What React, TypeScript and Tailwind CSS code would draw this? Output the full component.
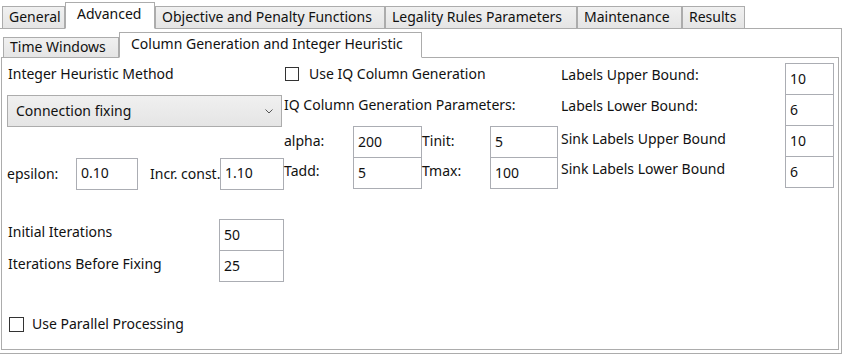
import React from "react";

const Tab = ({ label, w, selected, h, pb = 0 }: { label: string; w: number; selected?: boolean; h: number; pb?: number }) => (
  <div
    className={
      "relative -mb-px flex items-center border border-[#acacac] " +
      (selected ? "z-10 border-b-white bg-white pl-[11px]" : "bg-gradient-to-b from-[#f0f0f0] to-[#e5e5e5] pl-[6px]")
    }
    style={{ width: w, height: h, paddingBottom: pb }}
  >
    <span className="whitespace-nowrap">{label}</span>
  </div>
);

const Input = ({ value, w, className = "" }: { value: string; w: number; className?: string }) => (
  <div
    className={"flex h-[32px] shrink-0 items-center border border-[#abadb3] bg-white pl-[4px] pb-[1px] " + className}
    style={{ width: w }}
  >
    {value}
  </div>
);

const Check = ({ className = "" }: { className?: string }) => (
  <div className={"h-[14px] w-[14px] shrink-0 border border-[#333333] bg-white " + className} />
);

export default function App() {
  return (
    <div
      className="h-[358px] w-[844px] overflow-hidden bg-white text-[14px] leading-[20px] text-[#111111]"
      style={{ fontFamily: '"Noto Sans", "Open Sans", sans-serif' }}
    >
      {/* outer tab strip */}
      <div className="flex h-[28px] items-end pl-[2px]">
        <Tab label="General" w={63} h={23} pb={2} />
        <Tab label="Advanced" w={90} h={27} selected pb={4} />
        <Tab label="Objective and Penalty Functions" w={230} h={23} pb={2} />
        <Tab label="Legality Rules Parameters" w={192} h={23} pb={2} />
        <Tab label="Maintenance" w={105} h={23} pb={2} />
        <Tab label="Results" w={63} h={23} pb={2} />
      </div>
      {/* outer panel */}
      <div className="h-[326px] w-[842px] border border-l-0 border-[#acacac] pl-[1px] pr-[2px] pt-[3px] pb-[3px]">
        {/* inner tab strip */}
        <div className="flex h-[25px] items-end pl-[2px]">
          <Tab label="Time Windows" w={116} h={21} pb={1} />
          <Tab label="Column Generation and Integer Heuristic" w={303} h={26} selected pb={3} />
        </div>
        {/* inner panel */}
        <div className="flex h-[293px] border border-[#acacac] bg-white">
          {/* col 1 */}
          <div className="flex w-[282px] flex-col pl-[5px]">
            <div className="mt-[6px] h-[20px] pl-[1px]">Integer Heuristic Method</div>
            <div className="mt-[11px] flex h-[32px] w-[275px] items-center justify-between border border-[#acacac] bg-gradient-to-b from-[#f0f0f0] to-[#e5e5e5] pl-[8px] pr-[8px] pb-[1px]">
              <span>Connection fixing</span>
              <svg width="8" height="5" viewBox="0 0 8 5" className="mt-[2px]">
                <polyline points="0.5,0.5 4,4 7.5,0.5" fill="none" stroke="#555" strokeWidth="1" />
              </svg>
            </div>
            <div className="mt-[31px] flex h-[31px] items-center">
              <span className="w-[69px]">epsilon:</span>
              <Input value="0.10" w={62} className="h-[31px]" />
              <span className="ml-[12px] w-[70px] whitespace-nowrap">Incr. const.</span>
              <Input value="1.10" w={64} className="h-[31px]" />
            </div>
            <div className="mt-[30px] flex h-[32px] items-center">
              <span className="w-[212px] pl-[1px] pb-[7px]">Initial Iterations</span>
              <Input value="50" w={65} />
            </div>
            <div className="-mt-px flex h-[32px] items-center">
              <span className="w-[212px] pl-[1px] pb-[5px]">Iterations Before Fixing</span>
              <Input value="25" w={65} />
            </div>
            <div className="mt-[32px] flex items-center">
              <Check className="ml-[2px] h-[15px] w-[15px]" />
              <span className="ml-[8px]">Use Parallel Processing</span>
            </div>
          </div>
          {/* col 2 */}
          <div className="flex w-[276px] flex-col">
            <div className="mt-[6px] flex items-center">
              <Check className="ml-[1px]" />
              <span className="ml-[10px]">Use IQ Column Generation</span>
            </div>
            <div className="mt-[11px] h-[20px]">IQ Column Generation Parameters:</div>
            <div className="mt-[11px] flex h-[32px] items-center">
              <span className="w-[69px] pb-[3px]">alpha:</span>
              <Input value="200" w={69} />
              <span className="w-[68px] pb-[3px]">Tinit:</span>
              <Input value="5" w={68} />
            </div>
            <div className="-mt-px flex h-[32px] items-center">
              <span className="w-[69px] pb-[5px]">Tadd:</span>
              <Input value="5" w={69} />
              <span className="w-[68px] pb-[5px]">Tmax:</span>
              <Input value="100" w={68} />
            </div>
          </div>
          {/* col 3 */}
          <div className="flex w-[275px] flex-col pl-[1px]">
            <div className="mt-[5px] flex h-[32px] items-center">
              <span className="w-[224px] pb-[8px]">Labels Upper Bound:</span>
              <Input value="10" w={49} />
            </div>
            <div className="-mt-px flex h-[32px] items-center">
              <span className="w-[224px] pb-[8px]">Labels Lower Bound:</span>
              <Input value="6" w={49} />
            </div>
            <div className="-mt-px flex h-[32px] items-center">
              <span className="w-[224px] pb-[4px]">Sink Labels Upper Bound</span>
              <Input value="10" w={49} />
            </div>
            <div className="-mt-px flex h-[32px] items-center">
              <span className="w-[224px] pb-[6px]">Sink Labels Lower Bound</span>
              <Input value="6" w={49} />
            </div>
          </div>
        </div>
      </div>
    </div>
  );
}
